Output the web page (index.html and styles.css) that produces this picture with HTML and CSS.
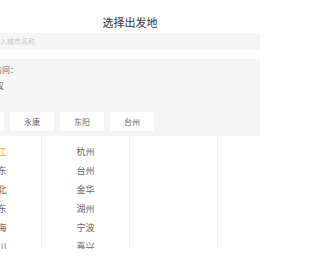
FILE: index.html
```html
<!DOCTYPE html>
<html lang="zh-CN">
<head>
<meta charset="utf-8">
<title>选择出发地</title>
<link rel="stylesheet" href="styles.css">
</head>
<body>
<div class="panel">
  <div class="title">选择出发地</div>
  <div class="search">请输入城市名称</div>
  <div class="history">
    <div class="label">历史访问<span class="colon">：</span></div>
    <div class="row">
      <div class="htag">武汉</div>
    </div>
    <div class="row hot">
      <div class="tag">义乌</div>
      <div class="tag">永康</div>
      <div class="tag">东阳</div>
      <div class="tag">台州</div>
    </div>
  </div>
  <div class="cols">
    <div class="col">
      <div class="item active">浙江</div>
      <div class="item">广东</div>
      <div class="item">湖北</div>
      <div class="item">山东</div>
      <div class="item">上海</div>
      <div class="item">四川</div>
    </div>
    <div class="col">
      <div class="item">杭州</div>
      <div class="item">台州</div>
      <div class="item">金华</div>
      <div class="item">湖州</div>
      <div class="item">宁波</div>
      <div class="item">嘉兴</div>
    </div>
    <div class="col"></div>
    <div class="col"></div>
  </div>
</div>
</body>
</html>
```

FILE: styles.css
```css
html {
  margin: 0;
  padding: 0;
  overflow: hidden;
  width: 260px;
  height: 264px;
  background: #fff;
}
body {
  margin: 0;
  padding: 0;
  width: 260px;
  height: 264px;
  overflow: hidden;
  display: flex;
  justify-content: center;
  background: #fff;
  font-family: "Noto Sans CJK SC", "Noto Sans", sans-serif;
}
.panel {
  width: 352px;
  flex-shrink: 0;
}
.title {
  height: 33px;
  box-sizing: border-box;
  padding-top: 12px;
  line-height: 21px;
  font-size: 11px;
  color: #333;
  text-align: center;
}
.search {
  height: 17px;
  line-height: 17px;
  background: #f5f5f5;
  padding-left: 32px;
  font-size: 7px;
  color: #c6c6c6;
}
.history {
  margin-top: 9px;
  background: #f5f5f5;
  padding: 6px 0 5px 0;
}
.label {
  line-height: 10px;
  font-size: 8px;
  color: #666;
  padding-left: 24px;
}
.colon {
  font-family: "Noto Sans CJK TC", "Noto Sans CJK SC", sans-serif;
}
.row {
  display: flex;
  gap: 6px;
  padding-left: 6px;
  margin-top: 2px;
}
.row.hot {
  margin-top: 18px;
}
.htag {
  width: 45px;
  height: 17px;
  box-sizing: border-box;
  background: #fff;
  display: flex;
  align-items: center;
  justify-content: flex-end;
  padding-right: 1px;
  font-size: 8px;
  color: #555;
}
.tag {
  width: 44px;
  height: 19px;
  line-height: 19px;
  background: #fff;
  text-align: center;
  font-size: 8px;
  color: #666;
}
.cols {
  display: flex;
  height: 113px;
  overflow: hidden;
}
.col {
  width: 88px;
  box-sizing: border-box;
  border-right: 1px solid #eeeeee;
  padding-top: 6px;
}
.item {
  line-height: 19px;
  height: 19px;
  text-align: center;
  font-size: 9px;
  color: #666;
}
.item.active {
  color: #f0a623;
}
```
